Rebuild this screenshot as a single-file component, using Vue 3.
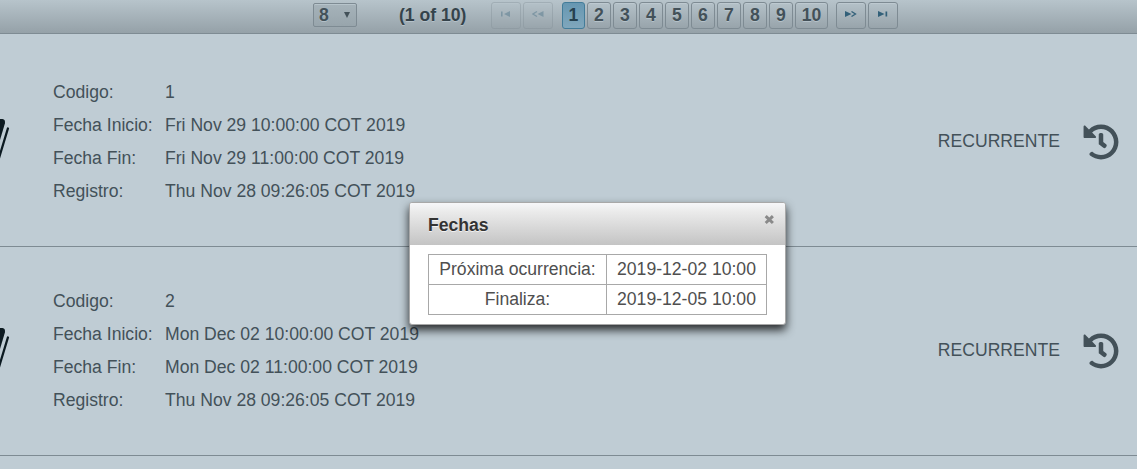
<script setup>
const pages = [1, 2, 3, 4, 5, 6, 7, 8, 9, 10]
const rows = [
  { codigo: '1', inicio: 'Fri Nov 29 10:00:00 COT 2019', fin: 'Fri Nov 29 11:00:00 COT 2019', registro: 'Thu Nov 28 09:26:05 COT 2019' },
  { codigo: '2', inicio: 'Mon Dec 02 10:00:00 COT 2019', fin: 'Mon Dec 02 11:00:00 COT 2019', registro: 'Thu Nov 28 09:26:05 COT 2019' }
]
</script>

<template>
  <div class="page">
    <div class="paginator">
      <div class="select"><span>8</span><span class="caret"></span></div>
      <span class="current">(1 of 10)</span>
      <div class="nav">
        <span class="btn arrow disabled">
          <svg width="10" height="6" viewBox="0 0 10 6"><path d="M0 .5h1.600v5H0zM9 0v6L3 3z" /></svg>
        </span>
        <span class="btn arrow disabled">
          <svg width="12" height="6" viewBox="0 0 12 6"><path d="M11.500 0v6L5.500 3z" /><path class="line" d="M5 .5L1 3l4 2.500" /></svg>
        </span>
      </div>
      <div class="pages">
        <span v-for="p in pages" :key="p" class="btn num" :class="{ active: p === 1, wide: p === 10 }">{{ p }}</span>
      </div>
      <div class="nav">
        <span class="btn arrow">
          <svg width="12" height="6" viewBox="0 0 12 6"><path d="M0 0v6l6.500-3z" /><path class="line" d="M6.500 .5L10.500 3l-4 2.500" /></svg>
        </span>
        <span class="btn arrow">
          <svg width="10" height="6" viewBox="0 0 10 6"><path d="M0 0v6l6.500-3zM7.500 .5H9.200v5H7.500z" /></svg>
        </span>
      </div>
    </div>

    <div class="list">
      <div v-for="r in rows" :key="r.codigo" class="row">
        <svg class="book" width="10" height="44" viewBox="0 0 10 44">
          <path d="M0 2H2.500Q5.600 2.300 4.900 6.500L0 23z" />
          <path class="edge" d="M7.900 11.500L-1 41" />
        </svg>
        <dl class="fields">
          <dt>Codigo:</dt><dd>{{ r.codigo }}</dd>
          <dt>Fecha Inicio:</dt><dd>{{ r.inicio }}</dd>
          <dt>Fecha Fin:</dt><dd>{{ r.fin }}</dd>
          <dt>Registro:</dt><dd>{{ r.registro }}</dd>
        </dl>
        <span class="type">RECURRENTE</span>
        <svg class="history" width="36" height="36" viewBox="0 0 512 512">
          <path d="M504 255.531c.253 136.64-111.18 248.372-247.82 248.468-59.015.042-113.223-20.53-155.822-54.911-11.077-8.94-11.905-25.541-1.839-35.607l11.267-11.267c8.609-8.609 22.353-9.551 31.891-1.984C173.062 425.135 212.781 440 256 440c101.705 0 184-82.311 184-184 0-101.705-82.311-184-184-184-48.814 0-93.149 18.969-126.068 49.932l50.754 50.754c10.08 10.08 2.941 27.314-11.313 27.314H24c-8.837 0-16-7.163-16-16V38.627c0-14.254 17.234-21.393 27.314-11.314l49.372 49.372C129.209 34.136 189.552 8 256 8c136.81 0 247.747 110.78 248 247.531zm-180.912 78.784l9.823-12.63c8.138-10.463 6.253-25.542-4.21-33.679L288 256.349V152c0-13.255-10.745-24-24-24h-16c-13.255 0-24 10.745-24 24v135.651l65.409 50.874c10.463 8.137 25.541 6.253 33.679-4.210z" />
        </svg>
      </div>
    </div>

    <div class="dialog">
      <div class="titlebar">
        <span>Fechas</span>
        <svg class="close" width="10" height="10" viewBox="0 0 10 10"><path d="M1.700 1.200l7.200 6.800M8.900 1.200l-7.200 6.800" /></svg>
      </div>
      <table>
        <tbody>
          <tr><td class="label">Próxima ocurrencia:</td><td>2019-12-02 10:00</td></tr>
          <tr><td class="label">Finaliza:</td><td>2019-12-05 10:00</td></tr>
        </tbody>
      </table>
    </div>
  </div>
</template>

<style>
body { margin: 0; overflow: hidden; }
</style>

<style scoped>
.page {
  position: relative;
  width: 1137px;
  height: 469px;
  overflow: hidden;
  box-sizing: border-box;
  background: #bfccd4;
  color: #435159;
  font-family: "Liberation Sans", Arial, sans-serif;
  font-size: 17.6px;
}
.paginator {
  box-sizing: border-box;
  height: 34px;
  padding: 2px 0 0 313px;
  display: flex;
  align-items: flex-start;
  background: linear-gradient(#b7c4cb, #95a1a8);
  border-bottom: 1px solid #7e8b93;
  font-weight: bold;
  text-shadow: 0 1px 0 rgba(191, 204, 212, 0.7);
}
.select {
  box-sizing: border-box;
  width: 44px;
  height: 24px;
  margin-top: 1px;
  padding: 0 6px 0 5px;
  display: flex;
  align-items: center;
  justify-content: space-between;
  border: 1px solid #7e8b93;
  border-radius: 2px;
  background: linear-gradient(#a6b3ba, #98a5ac);
  box-shadow: inset 0 1px #b7c4cb;
}
.caret {
  border: 3.5px solid transparent;
  border-top: 6px solid #435159;
  border-bottom: 0;
}
.current {
  width: 68px;
  margin: 0 24px 0 42px;
  line-height: 26px;
  color: #35434b;
  white-space: nowrap;
}
.nav, .pages { display: flex; gap: 2px; }
.pages { margin: 0 8px 0 9px; }
.btn {
  box-sizing: border-box;
  height: 27px;
  border: 1px solid #7e8b93;
  border-radius: 3px;
  background: linear-gradient(#b4c1c8, #98a4ab);
  box-shadow: inset 0 1px #bdc9d0;
  line-height: 25px;
  text-align: center;
}
.num { width: 24px; }
.wide { width: 33px; }
.active {
  width: 23px;
  background: linear-gradient(#6697b2, #80a7bc);
  border-color: #427c99;
  box-shadow: none;
  color: #26414f;
  text-shadow: none;
}
.arrow {
  width: 30px;
  padding-top: 8px;
  line-height: 0;
}
.arrow svg { fill: #326079; }
.arrow .line { fill: none; stroke: #326079; stroke-width: 1.3; }
.disabled { opacity: 0.35; }
.list { padding-top: 4px; }
.row {
  box-sizing: border-box;
  height: 209px;
  padding: 38px 18px 0 0;
  display: flex;
  align-items: flex-start;
  border-bottom: 1px solid #7e8b93;
}
.book { margin-top: 41px; fill: #0c1a21; }
.edge { stroke: #0c1a21; stroke-width: 2.3; stroke-linecap: round; }
.fields {
  margin: 0 auto 0 43px;
  display: grid;
  grid-template-columns: 112px auto;
  line-height: 33px;
}
.fields dd { margin: 0; }
.type { line-height: 33px; margin: 49px 23px 0 0; }
.history { margin-top: 47.5px; fill: #435159; }
.dialog {
  position: absolute;
  left: 409px;
  top: 202px;
  box-sizing: border-box;
  width: 377px;
  height: 123px;
  background: #fff;
  border: 1px solid #a8a8a8;
  border-radius: 3px;
  box-shadow: 0 5px 10px rgba(0, 0, 0, 0.8);
  color: #4f4f4f;
}
.titlebar {
  box-sizing: border-box;
  height: 42px;
  padding: 0 11px 0 18px;
  display: flex;
  justify-content: space-between;
  background: linear-gradient(#f6f7f9, #ebebeb 20%, #c4c4c4);
  border-radius: 2px 2px 0 0;
  font-weight: bold;
  line-height: 45px;
  color: #333;
  text-shadow: 0 1px 0 rgba(255, 255, 255, 0.7);
}
.close {
  margin-top: 12px;
  fill: none;
  stroke: #8a8a8a;
  stroke-width: 3;
}
table {
  width: 339px;
  margin: 9px 0 0 18px;
  border-collapse: collapse;
}
td {
  box-sizing: border-box;
  height: 30px;
  padding: 0 0 2px;
  border: 1px solid #a8a8a8;
  text-align: center;
  line-height: 26px;
  white-space: nowrap;
}
.label { width: 178px; }
</style>
